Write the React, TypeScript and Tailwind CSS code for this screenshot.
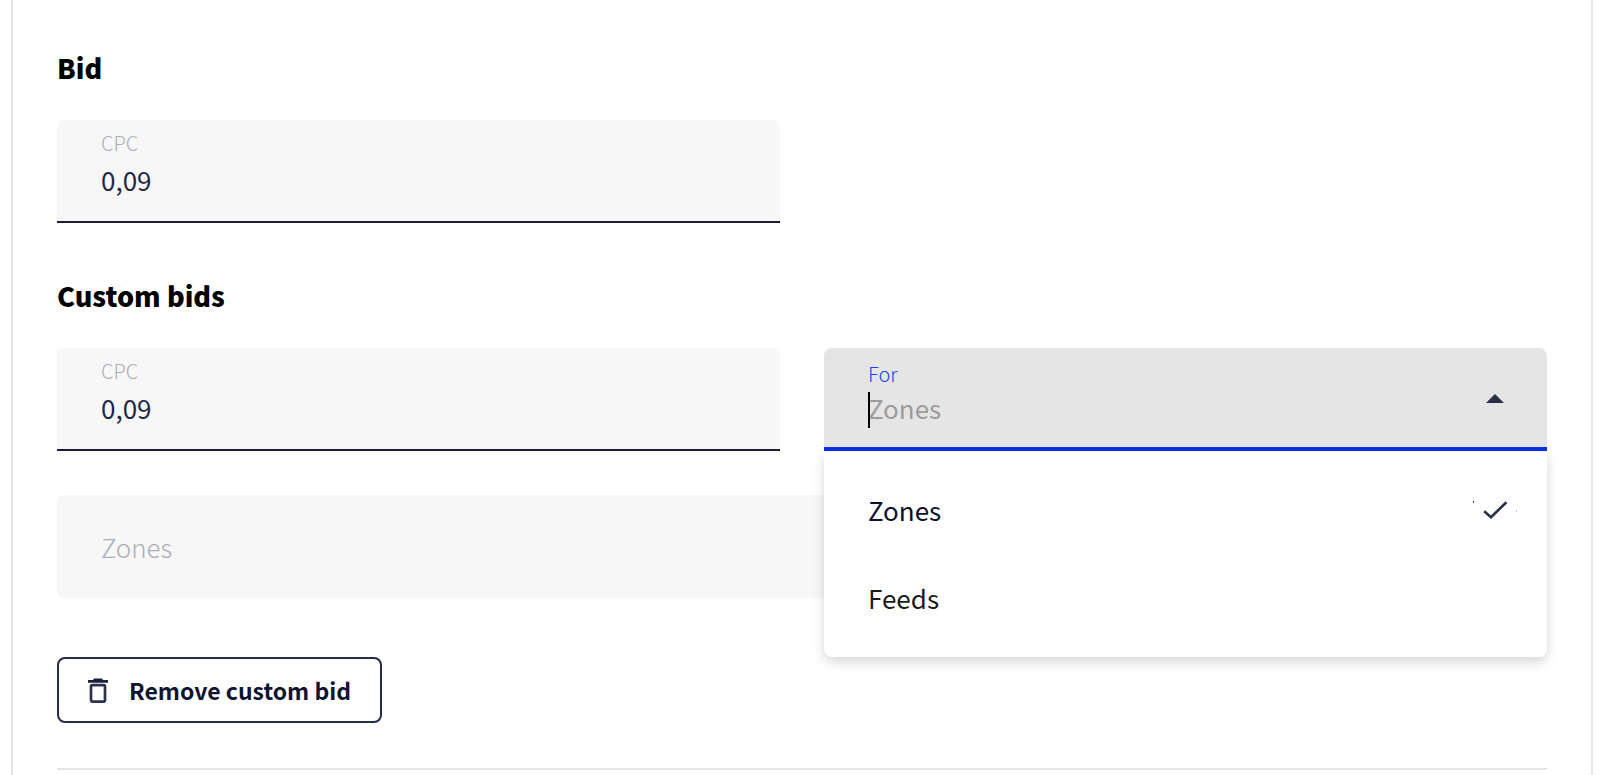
import { useId, useState } from "react";

const font =
  "font-['Noto_Sans_CJK_SC','Noto_Sans_CJK_JP','Open_Sans',sans-serif]";

function BidField({ defaultValue }: { defaultValue: string }) {
  const id = useId();
  return (
    <div className="flex h-[103px] flex-col gap-[7px] rounded-t-lg border-b-2 border-[#1a1c3a] bg-[#f7f7f7] px-11 pt-[11px]">
      <label
        htmlFor={id}
        className="text-xl leading-6 font-light text-[#acaeb6]"
      >
        CPC
      </label>
      <input
        id={id}
        defaultValue={defaultValue}
        className="h-9 w-full bg-transparent text-[26px] leading-9 text-[#1f2747] outline-none"
      />
    </div>
  );
}

function Check() {
  return (
    <svg
      viewBox="0 0 44 18"
      className="h-[18px] w-11"
      aria-hidden="true"
    >
      <path
        d="M11.2 10.2 L18 16.2 L33.4 1.2"
        fill="none"
        stroke="#2a3047"
        strokeWidth="2.6"
      />
      <rect x="0" y="0" width="1" height="2" fill="#3a4055" />
      <rect x="43" y="9" width="1" height="2" fill="#c4c6cd" />
    </svg>
  );
}

function Trash() {
  return (
    <svg viewBox="0 0 20 25" className="h-[25px] w-5" aria-hidden="true">
      <path d="M0 2 H5 L6 0.4 H14 L15 2 H20 V4.8 H0 Z" fill="#1c213b" />
      <rect
        x="3"
        y="7.1"
        width="14"
        height="16.6"
        rx="1.4"
        fill="none"
        stroke="#2c324b"
        strokeWidth="2.7"
      />
    </svg>
  );
}

function TargetSelect({ options }: { options: string[] }) {
  const id = useId();
  const [selected, setSelected] = useState(options[0]);
  return (
    <div className="relative">
      <div className="flex h-[103px] items-start rounded-t-lg border-b-4 border-[#0b30e6] bg-[#e5e5e5] pr-[43px] pl-11">
        <div className="relative flex flex-1 flex-col gap-1 pt-[14px]">
          <label
            htmlFor={id}
            className="text-xl leading-6 font-light text-[#1546f5]"
          >
            For
          </label>
          <input
            id={id}
            role="combobox"
            aria-expanded="true"
            aria-controls={`${id}-list`}
            placeholder={selected}
            className="h-9 w-full bg-transparent text-[26px] leading-9 outline-none placeholder:text-[#9c9c9c]"
          />
          <span className="absolute top-11 left-0 h-9 w-[2px] bg-black" />
        </div>
        <svg
          viewBox="0 0 18 9"
          className="mt-[46px] h-[9px] w-[18px]"
          aria-hidden="true"
        >
          <path d="M0 9 L9 0 L18 9 Z" fill="#2a3047" />
        </svg>
      </div>
      <ul
        id={`${id}-list`}
        role="listbox"
        aria-label="For"
        className="absolute inset-x-0 top-full z-10 rounded-b-lg bg-white py-[15px] shadow-[0_5px_12px_rgba(0,0,0,0.16)]"
      >
        {options.map((option, i) => (
          <li
            key={option}
            role="option"
            aria-selected={option === selected}
            onClick={() => setSelected(option)}
            className={`flex h-[88px] cursor-pointer items-center justify-between pr-[30px] pl-11 text-[26px] leading-9 ${
              i === 0 ? "text-[#0b0f2b]" : "text-[#1a1a1a]"
            }`}
          >
            {option}
            {option === selected && <Check />}
          </li>
        ))}
      </ul>
    </div>
  );
}

export default function App() {
  return (
    <main className={`min-h-screen bg-white pr-[7px] pl-[11px] ${font}`}>
      <form className="min-h-screen border-x-2 border-[#e5e5e5] px-11 pt-[50px]">
        <h2 className="text-[27px] leading-9 font-black text-black">Bid</h2>
        <div className="mt-[34px] grid grid-cols-2 gap-11">
          <BidField defaultValue="0,09" />
        </div>

        <h2 className="mt-[55px] text-[27px] leading-9 font-black text-black">
          Custom bids
        </h2>
        <div className="mt-[34px] grid grid-cols-2 gap-11">
          <BidField defaultValue="0,09" />
          <TargetSelect options={["Zones", "Feeds"]} />
        </div>

        <div className="mt-11 flex h-[103px] items-center rounded-lg bg-[#f7f7f7] px-11">
          <input
            aria-label="Zones"
            placeholder="Zones"
            className="h-9 w-full bg-transparent text-[26px] leading-9 font-light outline-none placeholder:text-[#acaeb6]"
          />
        </div>

        <button
          type="button"
          className="mt-[59px] flex h-[66px] items-center gap-[21px] rounded-lg border-2 border-[#262b4a] px-[29px] text-[23px] leading-8 font-bold text-[#0f1433]"
        >
          <Trash />
          Remove custom bid
        </button>

        <hr className="mt-[45px] border-t-2 border-[#e5e5e5]" />
      </form>
    </main>
  );
}
